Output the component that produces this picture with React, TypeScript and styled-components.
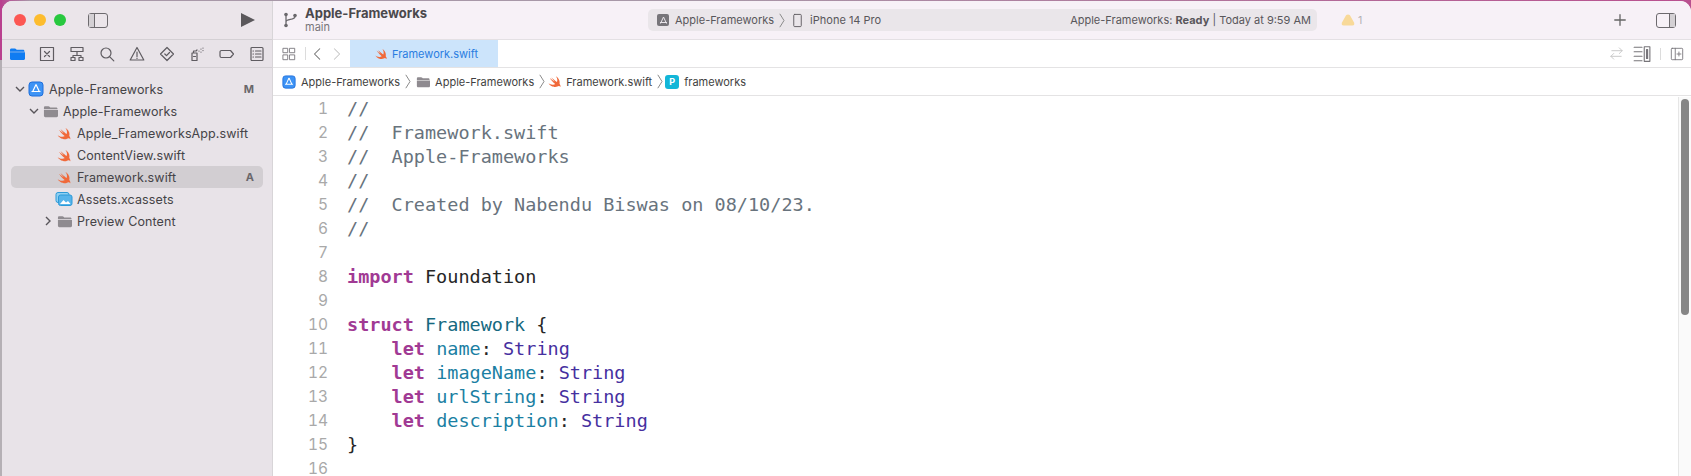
import React, {FC} from 'react';
import styled, {createGlobalStyle} from 'styled-components';
import {DiSwift} from 'react-icons/di';

const GlobalStyle = createGlobalStyle`
  html, body {
    margin: 0;
    padding: 0;
    overflow: hidden;
    background:
      linear-gradient(180deg, #b9408f 60px, #b5b0b5 60px) 0 0 / 2px 100% no-repeat,
      linear-gradient(90deg, #b9408f 0, #a898a8 30px, #a898a8 700px, #b9508f 100%);
  }
`;

const UI_FONT = `Inter, "Open Sans", "Liberation Sans", sans-serif`;

const SwiftIcon: FC<{size?: number}> = ({size = 19}) => <DiSwift size={size} color="#f0693a" />;

const FolderIcon: FC<{size?: number; color?: string}> = ({size = 15, color = '#8f8b90'}) => (
  <svg width={size} height={size} viewBox="0 0 16 16">
    <path fill={color} d="M1 4c0-1 .6-1.500 1.500-1.500h3.300c.7 0 1 .2 1.400.7l.5.6h6.300c.9 0 1.500.6 1.500 1.500v.4H1z" />
    <path fill={color} d="M1 6.300h15v6.200c0 .9-.6 1.500-1.500 1.500h-12C1.600 14 1 13.400 1 12.500z" />
  </svg>
);

const AppIcon: FC<{size?: number}> = ({size = 15}) => (
  <svg width={size} height={size} viewBox="0 0 16 16">
    <rect x="1" y="1" width="14" height="14" rx="3" fill="#3d93f5" stroke="#1f6fdc" />
    <path d="M8 3.500L4.500 11M8 3.500L11.500 11M3.500 10.500h9" stroke="#fff" strokeWidth="1.200" fill="none" />
  </svg>
);

const AssetsIcon: FC = () => (
  <svg width={18} height={16} viewBox="0 0 18 16">
    <rect x="1" y="1.500" width="13" height="10" rx="2" fill="#8fd0f2" stroke="#2c9ad8" />
    <rect x="3.500" y="4" width="13.500" height="10.500" rx="2" fill="#57b4ea" stroke="#2c9ad8" />
    <path d="M5 13l3.500-4 2.500 2.500 2-1.500 2.500 3z" fill="#fff" />
  </svg>
);

const Chevron: FC<{dir: 'down' | 'right'}> = ({dir}) => (
  <svg width={10} height={10} viewBox="0 0 10 10">
    <path
      d={dir === 'down' ? 'M1 3l4 4 4-4' : 'M3 1l4 4-4 4'}
      fill="none"
      stroke="#58555a"
      strokeWidth="1.400"
    />
  </svg>
);

const CrumbSep: FC = () => (
  <svg width={6} height={15} viewBox="0 0 6 15">
    <path d="M.8.800l4.200 6.700-4.200 6.700" fill="none" stroke="#8b8b8b" strokeWidth="1" />
  </svg>
);

const Line: FC<{d: string; size?: number; color?: string; width?: number}> = ({
  d,
  size = 16,
  color = '#5f5c61',
  width = 1.200,
}) => (
  <svg width={size} height={size} viewBox="0 0 16 16">
    <path d={d} fill="none" stroke={color} strokeWidth={width} strokeLinecap="round" strokeLinejoin="round" />
  </svg>
);

const navIcons = [
  <FolderIcon key="f" size={16} color="#0f7cf2" />,
  <Line key="x" d="M1.500 1.500h13v13h-13zM5.500 5.500l5 5M10.500 5.500l-5 5" />,
  <Line key="h" d="M2 1.500h12v4H2zM8 5.500v4M4 9.500h8M4 9.500v2M12 9.500v2M2 11.500h4v3H2zM10 11.500h4v3h-4z" />,
  <Line key="s" d="M7 2a5 5 0 1 0 0 10A5 5 0 0 0 7 2zM10.800 10.800l4 4" />,
  <Line key="w" d="M8 1.500L14.800 14H1.200zM8 6v4.500M8 12v.4" />,
  <Line key="t" d="M8 1.500L14.500 8 8 14.500 1.500 8zM5.800 8l1.700 1.700 3-3.200" />,
  <Line key="d" d="M3 7h5v7.500H3zM4.500 7V5h2.500l1-1M4.500 10.500h2M10 5v.1M12 3v.1M12 6v.1M14 4.500v.1M14 2v.1" />,
  <Line key="b" d="M2.500 4.500h9l3 3.500-3 3.500h-9a1.500 1.500 0 0 1-1.500-1.500V6a1.500 1.500 0 0 1 1.500-1.500z" />,
  <Line key="r" d="M3 1.500h10a1 1 0 0 1 1 1v11a1 1 0 0 1-1 1H3a1 1 0 0 1-1-1v-11a1 1 0 0 1 1-1zM6.500 5H12M6.500 8H12M6.500 11H12M4 5h.5M4 8h.5M4 11h.5" />,
];

type Row = {
  label: string;
  indent: number;
  icon: React.ReactNode;
  chevron?: 'down' | 'right';
  status?: string;
  selected?: boolean;
};

const rows: Row[] = [
  {label: 'Apple-Frameworks', indent: 4, icon: <AppIcon size={16} />, chevron: 'down', status: 'M'},
  {label: 'Apple-Frameworks', indent: 18, icon: <FolderIcon />, chevron: 'down'},
  {label: 'Apple_FrameworksApp.swift', indent: 32, icon: <SwiftIcon />},
  {label: 'ContentView.swift', indent: 32, icon: <SwiftIcon />},
  {label: 'Framework.swift', indent: 32, icon: <SwiftIcon />, status: 'A', selected: true},
  {label: 'Assets.xcassets', indent: 32, icon: <AssetsIcon />},
  {label: 'Preview Content', indent: 32, icon: <FolderIcon />, chevron: 'right'},
];

type Tok = [string, 'c' | 'k' | 't' | 'p' | 'y' | 'x'];

const code: Tok[][] = [
  [['//', 'c']],
  [['//  Framework.swift', 'c']],
  [['//  Apple-Frameworks', 'c']],
  [['//', 'c']],
  [['//  Created by Nabendu Biswas on 08/10/23.', 'c']],
  [['//', 'c']],
  [],
  [['import', 'k'], [' Foundation', 'x']],
  [],
  [['struct', 'k'], [' ', 'x'], ['Framework', 't'], [' {', 'x']],
  [['    ', 'x'], ['let', 'k'], [' ', 'x'], ['name', 'p'], [': ', 'x'], ['String', 'y']],
  [['    ', 'x'], ['let', 'k'], [' ', 'x'], ['imageName', 'p'], [': ', 'x'], ['String', 'y']],
  [['    ', 'x'], ['let', 'k'], [' ', 'x'], ['urlString', 'p'], [': ', 'x'], ['String', 'y']],
  [['    ', 'x'], ['let', 'k'], [' ', 'x'], ['description', 'p'], [': ', 'x'], ['String', 'y']],
  [['}', 'x']],
  [],
];

const App: FC = () => (
  <>
    <GlobalStyle />
    <Frame>
      <Sidebar>
        <SideToolbar>
          <Lights>
            <Light color="#fc5753" />
            <Light color="#fdbc2e" />
            <Light color="#28c83f" />
          </Lights>
          <PanelToggle>
            <PanelDots />
          </PanelToggle>
          <PlayIcon viewBox="0 0 14 14" width={14} height={14}>
            <path d="M0 0l14 7-14 7z" fill="#5b585c" />
          </PlayIcon>
        </SideToolbar>
        <NavBar>
          {navIcons.map((icon, i) => (
            <NavSlot key={i}>{icon}</NavSlot>
          ))}
        </NavBar>
        <Tree>
          {rows.map((row, i) => (
            <TreeRow key={i} $selected={row.selected} $indent={row.indent}>
              <ChevronSlot>{row.chevron && <Chevron dir={row.chevron} />}</ChevronSlot>
              <IconSlot>{row.icon}</IconSlot>
              <RowLabel>{row.label}</RowLabel>
              {row.status && <RowStatus>{row.status}</RowStatus>}
            </TreeRow>
          ))}
        </Tree>
      </Sidebar>
      <Main>
        <Toolbar>
          <BranchIcon>
            <svg width={15} height={16} viewBox="0 0 15 16">
              <path d="M3 3v10M3 10c0-3.500 9-1.500 9-5.500" fill="none" stroke="#6a686c" strokeWidth="1.300" />
              <circle cx="3" cy="2.500" r="1.800" fill="#6a686c" />
              <circle cx="3" cy="13.500" r="1.800" fill="#6a686c" />
              <circle cx="12" cy="3.500" r="1.800" fill="#6a686c" />
            </svg>
          </BranchIcon>
          <Titles>
            <ProjectTitle>Apple-Frameworks</ProjectTitle>
            <BranchName>main</BranchName>
          </Titles>
          <StatusPill>
            <Scheme>
              <SchemeIcon>
                <svg width={11} height={11} viewBox="0 0 11 11">
                  <path d="M5.500 2L2.500 8.500M5.500 2l3 6.500M2 7.500h7" stroke="#e9e5ea" fill="none" />
                </svg>
              </SchemeIcon>
              <span>Apple-Frameworks</span>
              <CrumbSep />
              <Line d="M5 1.500h6a1 1 0 0 1 1 1v11a1 1 0 0 1-1 1H5a1 1 0 0 1-1-1v-11a1 1 0 0 1 1-1z" width={1} size={15} />
              <span>iPhone 14 Pro</span>
            </Scheme>
            <span>
              Apple-Frameworks: <b>Ready</b> | Today at 9:59 AM
            </span>
          </StatusPill>
          <WarnBadge>
            <svg width={14} height={12} viewBox="0 0 14 12">
              <path d="M7 .5c1.500 0 2 .8 2.800 2.200l3.200 5.800c.8 1.700 0 3-1.500 3h-9c-1.500 0-2.300-1.300-1.500-3l3.200-5.800C5 1.300 5.500.5 7 .5z" fill="#f8d999" />
            </svg>
            <WarnCount>1</WarnCount>
          </WarnBadge>
          <PlusIcon>
            <Line d="M8 2v12M2 8h12" width={1.500} color="#666" size={14} />
          </PlusIcon>
          <InspectorToggle>
            <InspectorDots />
          </InspectorToggle>
        </Toolbar>
        <TabBar>
          <Line d="M1.500 1.500h5v5h-5zM9 1.500h5.500v5H9zM1.500 9h5v5.500h-5zM9 9h5.500v5.500H9z" color="#77757a" width={1} size={14} />
          <BarDivider />
          <TabArrow>
            <Line d="M10 2L4 8l6 6" color="#707070" size={14} />
          </TabArrow>
          <TabArrow>
            <Line d="M5 2l6 6-6 6" color="#c5c5c5" size={14} />
          </TabArrow>
          <ActiveTab>
            <SwiftIcon size={16} />
            <span>Framework.swift</span>
          </ActiveTab>
          <TabTools>
            <Line d="M14 5H3M11 2l3 3-3 3M2 11h11M5 8l-3 3 3 3" color="#c6c6c6" width={1} size={15} />
            <Line d="M1 2h7M1 6h7M1 10h7M1 14h7M10 1.500h5v13h-5zM12 4h1v8h-1z" color="#77757a" width={1} size={18} />
            <ToolDivider />
            <Line d="M2.500 1.500h11a1 1 0 0 1 1 1v11a1 1 0 0 1-1 1h-11a1 1 0 0 1-1-1v-11a1 1 0 0 1 1-1zM6 1.500v13M8 8h4.500M10.200 5.700v4.600" color="#77757a" width={1} size={14} />
          </TabTools>
        </TabBar>
        <Breadcrumb>
          <AppIcon size={14} />
          <Crumb>Apple-Frameworks</Crumb>
          <CrumbSep />
          <FolderIcon size={14} />
          <Crumb>Apple-Frameworks</Crumb>
          <CrumbSep />
          <CrumbSwift>
            <SwiftIcon size={17} />
          </CrumbSwift>
          <Crumb>Framework.swift</Crumb>
          <CrumbSep />
          <PropBadge>P</PropBadge>
          <Crumb>frameworks</Crumb>
        </Breadcrumb>
        <Editor>
          <Gutter>
            {code.map((_, i) => (
              <LineNumber key={i}>{i + 1}</LineNumber>
            ))}
          </Gutter>
          <CodeArea>
            {code.map((line, i) => (
              <CodeLine key={i}>
                {line.map(([text, kind], j) => (
                  <Token key={j} $kind={kind}>
                    {text}
                  </Token>
                ))}
              </CodeLine>
            ))}
          </CodeArea>
          <ScrollTrack>
            <ScrollThumb />
          </ScrollTrack>
        </Editor>
      </Main>
    </Frame>
  </>
);

export default App;

const Frame = styled.div`
  width: 1689px;
  height: 475px;
  margin: 1px 0 0 2px;
  display: flex;
  overflow: hidden;
  border-radius: 11px 11px 0 0;
  background: #fff;
  font-family: ${UI_FONT};
`;

const Sidebar = styled.aside`
  width: 271px;
  flex-shrink: 0;
  background: #e8e3e8;
  border-right: 1px solid #d8d5d8;
  box-sizing: border-box;
  color: #454347;
`;

const SideToolbar = styled.div`
  height: 38px;
  display: flex;
  align-items: center;
  padding: 0 17px 0 12px;
  border-bottom: 1px solid #d4d0d4;
  background: #ebe5ea;
`;

const Lights = styled.div`
  display: flex;
  gap: 8px;
`;

const Light = styled.span<{color: string}>`
  width: 12px;
  height: 12px;
  border-radius: 50%;
  background: ${props => props.color};
`;

const PanelToggle = styled.div`
  width: 18px;
  height: 13px;
  margin-left: 22px;
  border: 1.5px solid #6d6a6e;
  border-radius: 3px;
  display: flex;
`;

const PanelDots = styled.span`
  width: 5px;
  border-right: 1.5px solid #6d6a6e;
  background: #d4d0d4;
`;

const PlayIcon = styled.svg`
  margin-left: auto;
`;

const NavBar = styled.div`
  height: 27px;
  display: grid;
  grid-template-columns: repeat(9, 30px);
  align-items: center;
  border-bottom: 1px solid #d4d0d4;
`;

const NavSlot = styled.div`
  display: flex;
  justify-content: center;
`;

const Tree = styled.div`
  padding: 10px 9px 0 9px;
  font-size: 12.500px;
  letter-spacing: 0.1px;
`;

const TreeRow = styled.div<{$selected?: boolean; $indent: number}>`
  height: 22px;
  display: flex;
  align-items: center;
  padding-left: ${props => props.$indent}px;
  padding-right: 9px;
  border-radius: 5px;
  background: ${props => (props.$selected ? '#d2ced2' : 'transparent')};
`;

const ChevronSlot = styled.span`
  width: 10px;
  flex-shrink: 0;
  display: flex;
  justify-content: center;
`;

const IconSlot = styled.span`
  width: 18px;
  flex-shrink: 0;
  margin: 0 4px 0 2px;
  display: flex;
  justify-content: center;
`;

const RowLabel = styled.span`
  flex: 1;
`;

const RowStatus = styled.span`
  font-size: 11px;
  font-weight: 700;
  color: #6a676b;
`;

const Main = styled.main`
  flex: 1;
  min-width: 0;
  display: flex;
  flex-direction: column;
`;

const Toolbar = styled.div`
  height: 38px;
  flex-shrink: 0;
  display: flex;
  align-items: center;
  padding-left: 10px;
  background: #f7f1f7;
  border-bottom: 1px solid #e4e0e4;
`;

const BranchIcon = styled.span`
  display: flex;
`;

const Titles = styled.div`
  margin-left: 7px;
  width: 343px;
`;

const ProjectTitle = styled.div`
  font-size: 13px;
  font-weight: 700;
  line-height: 15px;
  color: #4a484c;
`;

const BranchName = styled.div`
  font-size: 11px;
  line-height: 13px;
  color: #77757a;
`;

const StatusPill = styled.div`
  width: 669px;
  height: 22px;
  box-sizing: border-box;
  display: flex;
  align-items: center;
  justify-content: space-between;
  padding: 0 6px 0 9px;
  border-radius: 5px;
  background: #eae6ea;
  font-size: 11px;
  color: #59575b;
  white-space: nowrap;
`;

const Scheme = styled.div`
  display: flex;
  align-items: center;
  gap: 5px;
`;

const SchemeIcon = styled.span`
  width: 12px;
  height: 12px;
  display: flex;
  align-items: center;
  justify-content: center;
  border-radius: 2px;
  background: #77757a;
  margin-right: 1px;
`;

const WarnBadge = styled.div`
  display: flex;
  align-items: center;
  gap: 3px;
  margin-left: 24px;
`;

const WarnCount = styled.span`
  font-size: 10.500px;
  color: #b3b0b3;
`;

const PlusIcon = styled.span`
  display: flex;
  margin-left: auto;
`;

const InspectorToggle = styled.div`
  width: 18px;
  height: 13px;
  margin: 0 15px 0 29px;
  border: 1.5px solid #6d6a6e;
  border-radius: 3px;
  display: flex;
  justify-content: flex-end;
`;

const InspectorDots = styled.span`
  width: 5px;
  border-left: 1.5px solid #6d6a6e;
  background: #d4d0d4;
`;

const TabBar = styled.div`
  height: 28px;
  flex-shrink: 0;
  box-sizing: border-box;
  display: flex;
  align-items: center;
  padding-left: 9px;
  border-bottom: 1px solid #e4e3e4;
`;

const BarDivider = styled.span`
  width: 1px;
  height: 13px;
  margin: 0 5px 0 9px;
  background: #dcdcdc;
`;

const TabArrow = styled.span`
  display: flex;
  margin-right: 5px;
`;

const ActiveTab = styled.div`
  width: 148px;
  height: 27px;
  box-sizing: border-box;
  margin-left: 1px;
  padding-left: 3px;
  display: flex;
  align-items: center;
  justify-content: center;
  gap: 3px;
  background: #cce4fb;
  color: #2a7de1;
  font-size: 11px;
`;

const TabTools = styled.div`
  margin-left: auto;
  padding-right: 7px;
  display: flex;
  align-items: center;
  gap: 9px;
`;

const ToolDivider = styled.span`
  width: 1px;
  height: 12px;
  background: #dcdcdc;
`;

const Breadcrumb = styled.div`
  height: 28px;
  flex-shrink: 0;
  box-sizing: border-box;
  display: flex;
  align-items: center;
  gap: 5px;
  padding-left: 9px;
  border-bottom: 1px solid #e4e3e4;
  color: #3f3f41;
`;

const Crumb = styled.span`
  font-size: 11px;
`;

const CrumbSwift = styled.span`
  display: flex;
  margin: 0 -2px 0 -4px;
`;

const PropBadge = styled.span`
  width: 14px;
  height: 14px;
  margin-left: -3px;
  border-radius: 3px;
  display: flex;
  align-items: center;
  justify-content: center;
  background: #12b6d8;
  color: #fff;
  font-size: 9px;
  font-weight: 700;
`;

const Editor = styled.div`
  flex: 1;
  min-height: 0;
  display: flex;
  overflow: hidden;
  padding-top: 1px;
`;

const Gutter = styled.div`
  width: 55px;
  flex-shrink: 0;
  text-align: right;
  color: #a9a9a9;
  font-size: 15.500px;
  font-variant-numeric: tabular-nums;
`;

const LineNumber = styled.div`
  height: 24px;
  line-height: 24px;
`;

const CodeArea = styled.div`
  flex: 1;
  padding-left: 19px;
  font-family: "DejaVu Sans Mono", "Liberation Mono", monospace;
  font-size: 18.500px;
  color: #262626;
`;

const CodeLine = styled.div`
  height: 24px;
  line-height: 24px;
  white-space: pre;
`;

const tokenColors = {
  c: '#68737d',
  k: '#a13a94',
  t: '#16697f',
  p: '#1b7fa3',
  y: '#46309f',
  x: '#262626',
};

const Token = styled.span<{$kind: keyof typeof tokenColors}>`
  color: ${props => tokenColors[props.$kind]};
  font-weight: ${props => (props.$kind === 'k' ? 700 : 400)};
`;

const ScrollTrack = styled.div`
  width: 13px;
  flex-shrink: 0;
  box-sizing: border-box;
  border-left: 1px solid #e6e6e6;
  background: #fafafa;
  padding: 2px 2px 0 2px;
`;

const ScrollThumb = styled.div`
  width: 8px;
  height: 216px;
  border-radius: 4px;
  background: #868686;
`;
